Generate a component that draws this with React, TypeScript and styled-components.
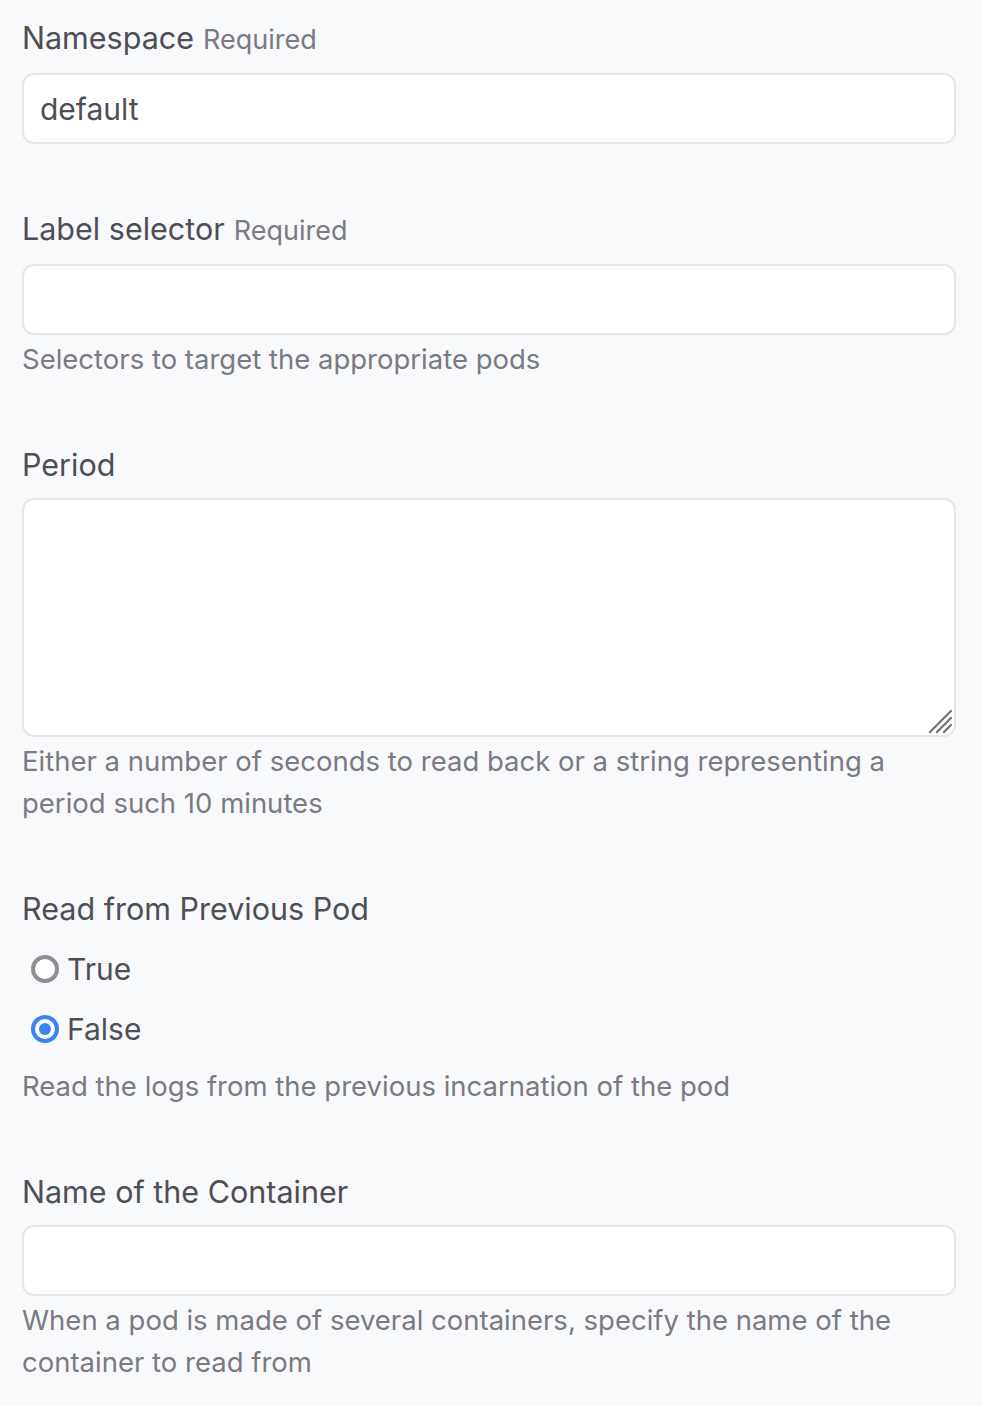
import React, { useState } from "react";
import styled, { createGlobalStyle } from "styled-components";

const GlobalStyle = createGlobalStyle`
  * { box-sizing: border-box; }
  html, body {
    margin: 0;
    padding: 0;
    background: #f8f9fb;
    font-family: Inter, "Noto Sans", "Liberation Sans", sans-serif;
    -webkit-font-smoothing: antialiased;
  }
`;

const Page = styled.div`
  padding: 18px 26px 20px 22px;
  display: flex;
  flex-direction: column;
  gap: 65px;
`;

const Field = styled.div`
  display: flex;
  flex-direction: column;
`;

const Label = styled.label`
  font-size: 30.5px;
  line-height: 40px;
  color: #4e4e55;
  font-weight: 400;
  margin-bottom: 13px;
`;

const Required = styled.span`
  font-size: 27px;
  color: #7a7a82;
  margin-left: 9px;
`;

const TextInput = styled.input`
  width: 100%;
  height: 71px;
  padding: 0 16px;
  border: 2px solid #e6e6ea;
  border-radius: 12px;
  background: #fff;
  font-family: inherit;
  font-size: 30px;
  color: #4e4e55;
  outline: none;
`;

const AreaWrap = styled.div`
  position: relative;
`;

const TextArea = styled.textarea`
  width: 100%;
  height: 239px;
  padding: 12px 16px;
  border: 2px solid #e6e6ea;
  border-radius: 12px;
  background: #fff;
  font-family: inherit;
  font-size: 30px;
  color: #4e4e55;
  outline: none;
  resize: none;
  display: block;
`;

const Grip = styled.svg`
  position: absolute;
  right: 3px;
  bottom: 3px;
  width: 26px;
  height: 26px;
  pointer-events: none;
`;

const Help = styled.p<{ $gap?: number }>`
  margin: ${(p) => p.$gap ?? 3}px 0 0;
  font-size: 27.5px;
  line-height: 42px;
  color: #7a7a82;
`;

const RadioGroup = styled.div`
  display: flex;
  flex-direction: column;
  margin-top: -3px;
`;

const RadioRow = styled.label`
  display: flex;
  align-items: center;
  height: 60px;
  padding-left: 9px;
  gap: 8px;
  cursor: pointer;
  font-size: 30px;
  color: #4e4e55;
`;

const RadioDot = styled.span<{ $checked: boolean }>`
  width: 28px;
  height: 28px;
  border-radius: 50%;
  border: 4px solid ${(p) => (p.$checked ? "#3b82f6" : "#8e8e95")};
  background: #fff;
  display: flex;
  align-items: center;
  justify-content: center;
  &::after {
    content: "";
    width: 12px;
    height: 12px;
    border-radius: 50%;
    background: ${(p) => (p.$checked ? "#3b82f6" : "transparent")};
  }
`;

function App() {
  const [previous, setPrevious] = useState<boolean>(false);
  return (
    <>
      <GlobalStyle />
      <Page>
        <Field>
          <Label>
            Namespace<Required>Required</Required>
          </Label>
          <TextInput defaultValue="default" />
        </Field>
        <Field>
          <Label>
            Label selector<Required>Required</Required>
          </Label>
          <TextInput />
          <Help>Selectors to target the appropriate pods</Help>
        </Field>
        <Field>
          <Label>Period</Label>
          <AreaWrap>
            <TextArea />
            <Grip viewBox="0 0 26 26">
              <g stroke="#6e6e73" strokeWidth="2" strokeLinecap="square">
                <line x1="3" y1="24" x2="24" y2="3" />
                <line x1="10" y1="24" x2="24" y2="10" />
                <line x1="17" y1="24" x2="24" y2="17" />
              </g>
            </Grip>
          </AreaWrap>
          <Help>
            Either a number of seconds to read back or a string representing a
            period such 10 minutes
          </Help>
        </Field>
        <Field>
          <Label>Read from Previous Pod</Label>
          <RadioGroup>
            <RadioRow onClick={() => setPrevious(true)}>
              <RadioDot $checked={previous} />
              True
            </RadioRow>
            <RadioRow onClick={() => setPrevious(false)}>
              <RadioDot $checked={!previous} />
              False
            </RadioRow>
          </RadioGroup>
          <Help $gap={6}>Read the logs from the previous incarnation of the pod</Help>
        </Field>
        <Field>
          <Label>Name of the Container</Label>
          <TextInput />
          <Help>
            When a pod is made of several containers, specify the name of the
            container to read from
          </Help>
        </Field>
      </Page>
    </>
  );
}

export default App;
